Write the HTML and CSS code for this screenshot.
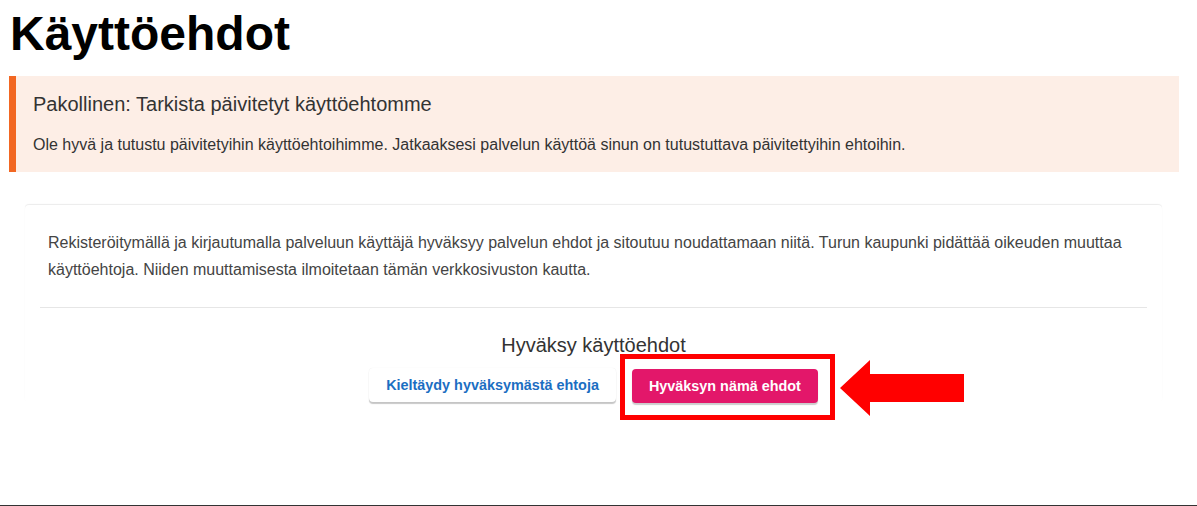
FILE: index.html
```html
<!DOCTYPE html>
<html lang="fi">
<head>
<meta charset="utf-8">
<title>Käyttöehdot</title>
<link rel="stylesheet" href="styles.css">
</head>
<body>
<main class="page">
  <h1 class="title">Käyttöehdot</h1>
  <div class="alert">
    <h2 class="alert-heading">Pakollinen: Tarkista päivitetyt käyttöehtomme</h2>
    <p class="alert-text">Ole hyvä ja tutustu päivitetyihin käyttöehtoihimme. Jatkaaksesi palvelun käyttöä sinun on tutustuttava päivitettyihin ehtoihin.</p>
  </div>
  <section class="card">
    <div class="card-body">
      <p>Rekisteröitymällä ja kirjautumalla palveluun käyttäjä hyväksyy palvelun ehdot ja sitoutuu noudattamaan niitä. Turun kaupunki pidättää oikeuden muuttaa käyttöehtoja. Niiden muuttamisesta ilmoitetaan tämän verkkosivuston kautta.</p>
    </div>
    <hr class="divider">
    <div class="card-footer">
      <h3 class="accept-title">Hyväksy käyttöehdot</h3>
      <div class="actions">
        <button class="btn btn-decline" type="button">Kieltäydy hyväksymästä ehtoja</button>
        <span class="highlight">
          <button class="btn btn-accept" type="button">Hyväksyn nämä ehdot</button>
          <svg class="arrow" width="126" height="58" viewBox="0 0 126 58" aria-hidden="true">
            <polygon points="0,28 30,0 30,14 124,14 124,42 30,42 30,56" fill="#ff0000"/>
          </svg>
        </span>
      </div>
    </div>
  </section>
</main>
<footer class="footer"></footer>
</body>
</html>
```
FILE: styles.css
```css
html, body {
  margin: 0;
  padding: 0;
  background: #ffffff;
}
body {
  font-family: "Liberation Sans", Arial, sans-serif;
  color: #3d3d3d;
  overflow: hidden;
}
.page {
  width: 1179px;
  padding: 7px 0 0 9px;
  height: 498px;
  box-sizing: border-box;
}
.title {
  margin: 0 0 16px 1px;
  font-size: 48px;
  line-height: 53px;
  font-weight: 700;
  color: #000;
}
.alert {
  background: #fdeee6;
  border-left: 7px solid #f26722;
  padding: 17px 16px 15px 17px;
}
.alert-heading {
  margin: 0;
  font-size: 20px;
  line-height: 22px;
  font-weight: 400;
  color: #333;
}
.alert-text {
  margin: 18px 0 0;
  font-size: 16px;
  line-height: 24px;
  color: #333;
}
.card {
  margin: 33px 0 0 16px;
  width: 1137px;
  border-radius: 4px;
  box-shadow: 0 -1px 1px rgba(0,0,0,0.08);
  padding: 0 15px;
  box-sizing: border-box;
}
.card-body {
  padding: 24px 8px 24px;
}
.card-body p {
  margin: 0;
  font-size: 16px;
  line-height: 27px;
  color: #444;
}
.divider {
  margin: 0;
  border: 0;
  border-top: 1px solid #e6e6e6;
}
.card-footer {
  display: flex;
  flex-direction: column;
  align-items: center;
  padding-top: 26px;
}
.accept-title {
  margin: 0 0 12px;
  font-size: 20px;
  line-height: 22px;
  font-weight: 400;
  color: #333;
}
.actions {
  display: flex;
  gap: 16px;
  align-items: flex-start;
}
.btn {
  font-family: "Liberation Sans", Arial, sans-serif;
  font-size: 14.4px;
  font-weight: 700;
  height: 34px;
  padding: 0 17px;
  border: 0;
  border-radius: 4px;
  cursor: pointer;
}
.btn-decline {
  background: #fff;
  color: #1b6ec2;
  box-shadow: 0 2px 1px rgba(0,0,0,0.22), 0 0 1px rgba(0,0,0,0.1);
}
.btn-accept {
  background: #e3176a;
  color: #fff;
  box-shadow: 0 2px 1px rgba(0,0,0,0.2);
}
.highlight {
  position: relative;
  display: inline-block;
  margin-top: 1px;
}
.highlight::after {
  content: "";
  position: absolute;
  left: -12px;
  right: -17px;
  top: -15px;
  bottom: -17px;
  border: 5px solid #ff0000;
  pointer-events: none;
}
.arrow {
  position: absolute;
  left: 208px;
  top: -9px;
}
.footer {
  border-top: 1px solid #333;
  height: 8px;
  margin-top: 7px;
}
```
